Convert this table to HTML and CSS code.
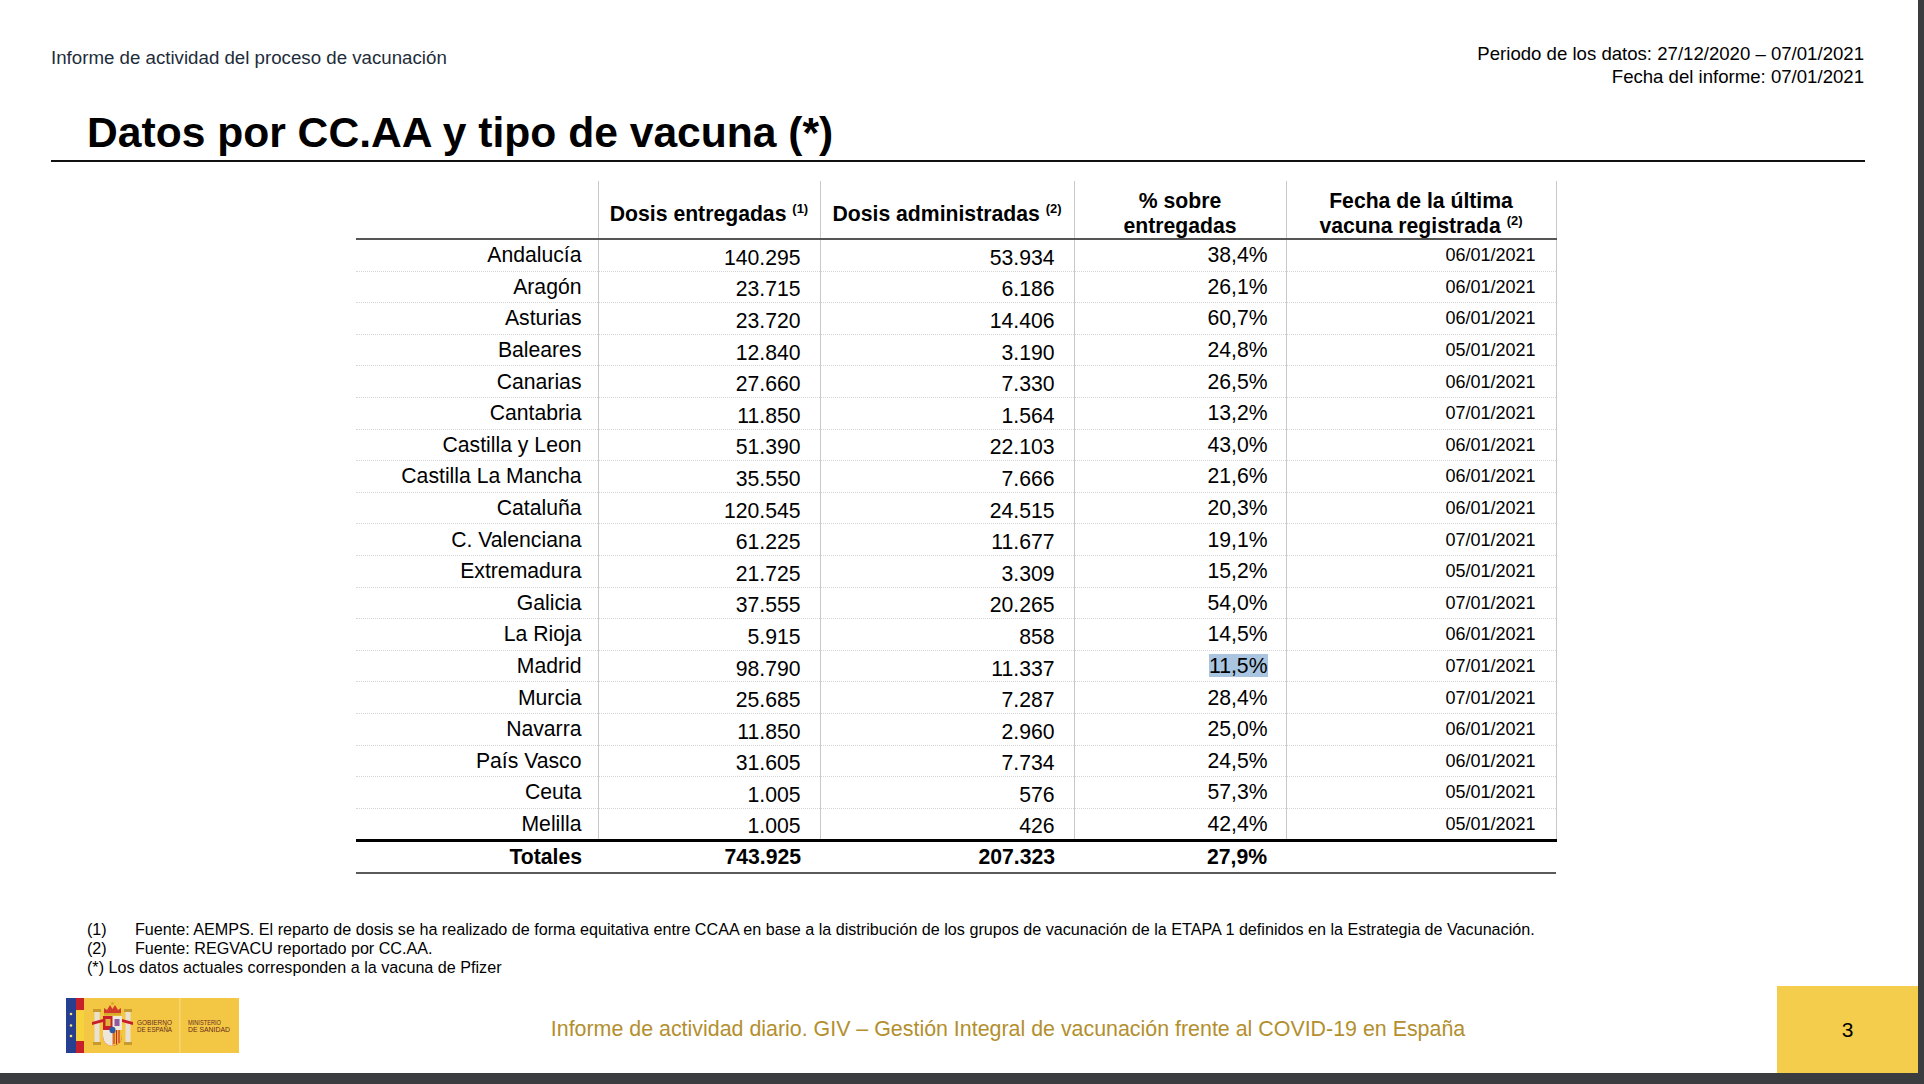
FILE: index.html
```html
<!DOCTYPE html>
<html lang="es">
<head>
<meta charset="utf-8">
<title>Datos por CC.AA y tipo de vacuna</title>
<link rel="stylesheet" href="styles.css">
</head>
<body>
<div class="slide">
  <div class="top">
    <div class="top-left">Informe de actividad del proceso de vacunación</div>
    <div class="top-right">
      <div>Periodo de los datos: 27/12/2020 – 07/01/2021</div>
      <div>Fecha del informe: 07/01/2021</div>
    </div>
  </div>
  <h1 class="title">Datos por CC.AA y tipo de vacuna (*)</h1>
  <div class="rule"></div>

  <table class="data">
    <colgroup>
      <col class="c0"><col class="c1"><col class="c2"><col class="c3"><col class="c4">
    </colgroup>
    <thead>
      <tr>
        <th class="blank"></th>
        <th>Dosis entregadas <sup>(1)</sup></th>
        <th>Dosis administradas <sup>(2)</sup></th>
        <th>% sobre<br>entregadas</th>
        <th class="last">Fecha de la última<br>vacuna registrada <sup>(2)</sup></th>
      </tr>
    </thead>
    <tbody>
      <tr><td class="name">Andalucía</td><td class="num">140.295</td><td class="num">53.934</td><td class="pct">38,4%</td><td class="date">06/01/2021</td></tr>
      <tr><td class="name">Aragón</td><td class="num">23.715</td><td class="num">6.186</td><td class="pct">26,1%</td><td class="date">06/01/2021</td></tr>
      <tr><td class="name">Asturias</td><td class="num">23.720</td><td class="num">14.406</td><td class="pct">60,7%</td><td class="date">06/01/2021</td></tr>
      <tr><td class="name">Baleares</td><td class="num">12.840</td><td class="num">3.190</td><td class="pct">24,8%</td><td class="date">05/01/2021</td></tr>
      <tr><td class="name">Canarias</td><td class="num">27.660</td><td class="num">7.330</td><td class="pct">26,5%</td><td class="date">06/01/2021</td></tr>
      <tr><td class="name">Cantabria</td><td class="num">11.850</td><td class="num">1.564</td><td class="pct">13,2%</td><td class="date">07/01/2021</td></tr>
      <tr><td class="name">Castilla y Leon</td><td class="num">51.390</td><td class="num">22.103</td><td class="pct">43,0%</td><td class="date">06/01/2021</td></tr>
      <tr><td class="name">Castilla La Mancha</td><td class="num">35.550</td><td class="num">7.666</td><td class="pct">21,6%</td><td class="date">06/01/2021</td></tr>
      <tr><td class="name">Cataluña</td><td class="num">120.545</td><td class="num">24.515</td><td class="pct">20,3%</td><td class="date">06/01/2021</td></tr>
      <tr><td class="name">C. Valenciana</td><td class="num">61.225</td><td class="num">11.677</td><td class="pct">19,1%</td><td class="date">07/01/2021</td></tr>
      <tr><td class="name">Extremadura</td><td class="num">21.725</td><td class="num">3.309</td><td class="pct">15,2%</td><td class="date">05/01/2021</td></tr>
      <tr><td class="name">Galicia</td><td class="num">37.555</td><td class="num">20.265</td><td class="pct">54,0%</td><td class="date">07/01/2021</td></tr>
      <tr><td class="name">La Rioja</td><td class="num">5.915</td><td class="num">858</td><td class="pct">14,5%</td><td class="date">06/01/2021</td></tr>
      <tr><td class="name">Madrid</td><td class="num">98.790</td><td class="num">11.337</td><td class="pct"><span class="selected">11,5%</span></td><td class="date">07/01/2021</td></tr>
      <tr><td class="name">Murcia</td><td class="num">25.685</td><td class="num">7.287</td><td class="pct">28,4%</td><td class="date">07/01/2021</td></tr>
      <tr><td class="name">Navarra</td><td class="num">11.850</td><td class="num">2.960</td><td class="pct">25,0%</td><td class="date">06/01/2021</td></tr>
      <tr><td class="name">País Vasco</td><td class="num">31.605</td><td class="num">7.734</td><td class="pct">24,5%</td><td class="date">06/01/2021</td></tr>
      <tr><td class="name">Ceuta</td><td class="num">1.005</td><td class="num">576</td><td class="pct">57,3%</td><td class="date">05/01/2021</td></tr>
      <tr class="lastrow"><td class="name">Melilla</td><td class="num">1.005</td><td class="num">426</td><td class="pct">42,4%</td><td class="date">05/01/2021</td></tr>
    </tbody>
    <tfoot>
      <tr><td class="name">Totales</td><td class="num">743.925</td><td class="num">207.323</td><td class="pct">27,9%</td><td class="date"></td></tr>
    </tfoot>
  </table>

  <div class="notes">
    <div class="note"><span class="note-num">(1)</span><span>Fuente: AEMPS. El reparto de dosis se ha realizado de forma equitativa entre CCAA en base a la distribución de los grupos de vacunación de la ETAPA 1 definidos en la Estrategia de Vacunación.</span></div>
    <div class="note"><span class="note-num">(2)</span><span>Fuente: REGVACU reportado por CC.AA.</span></div>
    <div class="note">(*) Los datos actuales corresponden a la vacuna de Pfizer</div>
  </div>

  <div class="footer">
    <svg class="logo" viewBox="0 0 173 55" width="173" height="55" aria-label="Gobierno de España - Ministerio de Sanidad">
      <rect x="0" y="0" width="173" height="55" fill="#f3c744"/>
      <rect x="0" y="0" width="10" height="55" fill="#263f8f"/>
      <circle cx="5" cy="16" r="1.3" fill="#f7e27a"/>
      <circle cx="5" cy="27.5" r="1.3" fill="#f7e27a"/>
      <circle cx="5" cy="38" r="1.3" fill="#f7e27a"/>
      <rect x="10" y="0" width="8" height="12" fill="#c8202b"/>
      <rect x="10" y="12" width="8" height="31" fill="#f6d23c"/>
      <rect x="10" y="43" width="8" height="12" fill="#c8202b"/>
      <!-- pillars -->
      <rect x="28.5" y="14" width="5" height="30" fill="#e9e2d4"/>
      <rect x="27" y="11" width="8" height="3" fill="#c79a2e"/>
      <rect x="27" y="44" width="8" height="3" fill="#c79a2e"/>
      <path d="M26 24 L37 21 L37 24 L26 27 Z" fill="#c8202b"/>
      <rect x="59.5" y="14" width="5" height="30" fill="#e9e2d4"/>
      <rect x="58" y="11" width="8" height="3" fill="#c79a2e"/>
      <rect x="58" y="44" width="8" height="3" fill="#c79a2e"/>
      <path d="M56 21 L67 24 L67 27 L56 24 Z" fill="#c8202b"/>
      <!-- crown -->
      <path d="M38 16 L38 10 L41 12 L44 7 L46.5 11 L49 7 L52 12 L55 10 L55 16 Z" fill="#d23a2a"/>
      <rect x="38" y="15" width="17" height="2.5" fill="#d9a92c"/>
      <circle cx="46.5" cy="5.5" r="1.4" fill="#d9a92c"/>
      <!-- shield -->
      <path d="M37 18 L56 18 L56 38 Q56 47 46.5 48 Q37 47 37 38 Z" fill="#c8202b"/>
      <rect x="46.5" y="18" width="9.5" height="14" fill="#eee8dc"/>
      <path d="M46.5 32 L56 32 L56 38 Q56 47 46.5 48 Z" fill="#f0c23a"/>
      <path d="M48 32 L48 46 M50.5 32 L50.5 46.5 M53 32 L53 45" stroke="#c8202b" stroke-width="1.1"/>
      <rect x="39.5" y="21" width="5" height="7" fill="#e0b43a"/>
      <rect x="48.5" y="21" width="5" height="7" fill="#8c5aa0"/>
      <path d="M37 32 L46.5 32 L46.5 48 Q37 47 37 38 Z" fill="#eee8dc"/>
      <ellipse cx="46.5" cy="32" rx="3" ry="3.3" fill="#2f5aa6"/>
      <text x="71" y="27" class="logo-t" textLength="35" lengthAdjust="spacingAndGlyphs">GOBIERNO</text>
      <text x="71" y="33.5" class="logo-t" textLength="35" lengthAdjust="spacingAndGlyphs">DE ESPAÑA</text>
      <rect x="113.5" y="0" width="0.8" height="55" fill="#f8e39a"/>
      <text x="122" y="27" class="logo-t" textLength="33" lengthAdjust="spacingAndGlyphs">MINISTERIO</text>
      <text x="122" y="33.5" class="logo-t" textLength="42" lengthAdjust="spacingAndGlyphs">DE SANIDAD</text>
    </svg>
    <div class="footer-text">Informe de actividad diario. GIV – Gestión Integral de vacunación frente al COVID-19 en España</div>
    <div class="page-num">3</div>
  </div>
</div>
</body>
</html>
```

FILE: styles.css
```css
html, body {
  margin: 0;
  padding: 0;
}

body {
  background: #3b3c3f;
  font-family: "Liberation Sans", Arial, sans-serif;
  color: #000;
}

.slide {
  width: 1918px;
  height: 1073px;
  background: #fff;
  display: flex;
  flex-direction: column;
}

.top {
  display: flex;
  justify-content: space-between;
  align-items: flex-start;
  padding: 42px 54px 0 51px;
}

.top-left {
  font-size: 18.7px;
  line-height: 23px;
  color: #1e2c3a;
  margin-top: 4px;
}

.top-right {
  text-align: right;
  font-size: 18.6px;
  line-height: 23px;
}

.title {
  font-size: 42.6px;
  font-weight: bold;
  line-height: 50px;
  margin: 19px 0 0 87px;
}

.rule {
  height: 2px;
  background: #111;
  margin: 3px 53px 0 51px;
}

.data {
  margin: 19px 0 0 356px;
  border-collapse: collapse;
  table-layout: fixed;
  width: 1200px;
  font-size: 21.2px;
}

.c0 { width: 242px; }
.c1 { width: 222px; }
.c2 { width: 254px; }
.c3 { width: 212px; }
.c4 { width: 270px; }

.data th {
  height: 49.7px;
  font-weight: bold;
  line-height: 25px;
  text-align: center;
  vertical-align: middle;
  padding: 7px 4px 0;
  border-left: 1px solid #c9c9c9;
  border-bottom: 2px solid #555;
}

.data th.blank {
  border-left: none;
}

.data th.last {
  border-right: 1px solid #c9c9c9;
}

.data sup {
  font-size: 13px;
  line-height: 0;
  vertical-align: 8px;
}

.data tbody td {
  height: 30.6px;
  padding: 0 18px 0 0;
  text-align: right;
  vertical-align: middle;
  line-height: 24px;
  border-bottom: 1px dotted #d4d4d4;
  border-left: 1px solid #c9c9c9;
}

.data tbody td:last-child {
  border-right: 1px solid #c9c9c9;
}

.data tbody td.name {
  border-left: none;
  padding-right: 16px;
}

.data tbody td.num {
  padding-top: 5px;
  padding-right: 19px;
  height: 25.6px;
}

.data td.date {
  font-size: 18px;
  padding-right: 20px;
}

.data tbody tr.lastrow td {
  border-bottom: 3px solid #000;
}

.selected {
  background: #a9c5df;
}

.data tfoot td {
  height: 30px;
  font-weight: bold;
  text-align: right;
  vertical-align: middle;
  padding: 0 19px 0 0;
  line-height: 24px;
  border-bottom: 2px solid #5a5a5a;
}

.data tfoot td.name {
  padding-right: 16px;
}

.notes {
  margin: 46px 0 0 87px;
  font-size: 16.15px;
  line-height: 19px;
}

.note {
  display: flex;
}

.note-num {
  width: 48px;
  flex: none;
}

.footer {
  margin-top: auto;
  height: 87px;
  display: flex;
  align-items: center;
}

.logo {
  flex: none;
  margin-left: 66px;
  margin-bottom: 8px;
}

.logo-t {
  font-family: "Liberation Sans", Arial, sans-serif;
  font-size: 6.5px;
  fill: #6a2b1e;
}

.footer-text {
  flex: 1;
  text-align: center;
  font-size: 21.4px;
  color: #b38f2e;
}

.page-num {
  width: 141px;
  align-self: stretch;
  background: #f3cd4b;
  display: flex;
  align-items: center;
  justify-content: center;
  font-size: 21px;
}
```
